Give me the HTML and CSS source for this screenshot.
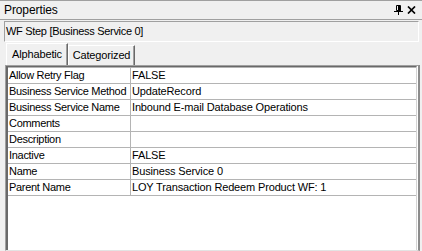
FILE: index.html
```html
<!DOCTYPE html>
<html>
<head>
    <meta charset="UTF-8">
    <title>Properties</title>
    <link rel="stylesheet" href="styles.css">
</head>
<body>
    <div class="pane">
      <div class="caption">
        <span class="caption-title">Properties</span>
        <span class="caption-tools">
          <svg class="pin" width="9" height="10" viewBox="0 0 9 10">
            <path d="M2.5 0.5h4v5h-4z M4.5 0.5v5" fill="none" stroke="#000" stroke-width="1"/>
            <path d="M5 1h2v5h-2z" fill="#000"/>
            <path d="M0 6.5h9 M4.5 6.5v3.5" stroke="#000" stroke-width="1"/>
          </svg>
          <svg class="close" width="9" height="8" viewBox="0 0 9 8">
            <path d="M1 0.5l7 7 M8 0.5l-7 7" stroke="#000" stroke-width="1.7"/>
          </svg>
        </span>
      </div>

      <div class="object-name">WF Step [Business Service 0]</div>

      <div class="tabs">
        <div class="tab active">Alphabetic</div>
        <div class="tab">Categorized</div>
      </div>

      <div class="grid-frame">
        <div class="grid-body">
          <div class="row"><div class="name">Allow Retry Flag</div><div class="value">FALSE</div></div>
          <div class="row"><div class="name">Business Service Method</div><div class="value">UpdateRecord</div></div>
          <div class="row"><div class="name">Business Service Name</div><div class="value">Inbound E-mail Database Operations</div></div>
          <div class="row"><div class="name">Comments</div><div class="value"></div></div>
          <div class="row"><div class="name">Description</div><div class="value"></div></div>
          <div class="row"><div class="name">Inactive</div><div class="value">FALSE</div></div>
          <div class="row"><div class="name">Name</div><div class="value">Business Service 0</div></div>
          <div class="row last"><div class="name">Parent Name</div><div class="value">LOY Transaction Redeem Product WF: 1</div></div>
        </div>
      </div>
    </div>
</body>
</html>
```

FILE: styles.css
```css
body {
  margin: 0;
  background: #f0f0f0;
  font-family: "Liberation Sans", Arial, sans-serif;
  font-size: 11px;
  letter-spacing: -0.15px;
  color: #000;
}

.pane {
  width: 422px;
  height: 251px;
  display: flex;
  flex-direction: column;
  overflow: hidden;
}

/* caption bar */
.caption {
  height: 18px;
  border-top: 1px solid #a0a0a0;
  border-bottom: 1px solid #a0a0a0;
  display: flex;
  align-items: center;
  justify-content: space-between;
  padding: 0 6px 0 4px;
}

.caption-title {
  font-size: 12px;
  letter-spacing: -0.1px;
}

.caption-tools {
  display: flex;
  align-items: center;
  gap: 4px;
}

.pin { display: block; }
.close { display: block; }

/* object name box */
.object-name {
  margin: 1px 3px 0 4px;
  height: 19px;
  line-height: 19px;
  padding-left: 1px;
  border: 1px solid;
  border-color: #a0a0a0 #fff #fff #a0a0a0;
  font-size: 11px;
  letter-spacing: -0.3px;
}

/* tabs */
.tabs {
  display: flex;
  align-items: flex-end;
  height: 23px;
  padding-left: 6px;
}

.tab {
  box-sizing: border-box;
  width: 67px;
  height: 20px;
  line-height: 19px;
  text-align: center;
  border-top: 1px solid #fff;
  border-left: 1px solid #fff;
  border-right: 1px solid #696969;
  box-shadow: inset -1px 0 0 #a0a0a0;
  white-space: nowrap;
}

.tab.active {
  width: 62px;
  height: 22px;
  line-height: 20px;
}

/* property grid */
.grid-frame {
  flex: 1;
  margin: 0 2px 0 5px;
  border-top: 1px solid #a0a0a0;
  border-left: 1px solid #a0a0a0;
  border-right: 3px solid #8c8c8c;
  border-bottom: 1px solid #e3e3e3;
  background: #fff;
}

.grid-body {
  height: 100%;
  box-sizing: border-box;
  border-top: 1px solid #696969;
  border-left: 2px solid #696969;
  border-right: 1px solid #d4d4d4;
  box-shadow: 1px 0 0 #fff;
}

.row {
  display: grid;
  grid-template-columns: 123px 1fr;
  height: 15px;
  line-height: 15px;
  border-top: 1px solid #b4b4b4;
  white-space: nowrap;
}

.row.last {
  border-bottom: 1px solid #b4b4b4;
}

.name {
  padding-left: 1px;
  border-right: 1px solid #b4b4b4;
  letter-spacing: -0.3px;
  overflow: hidden;
}

.value {
  padding-left: 1px;
}
```
